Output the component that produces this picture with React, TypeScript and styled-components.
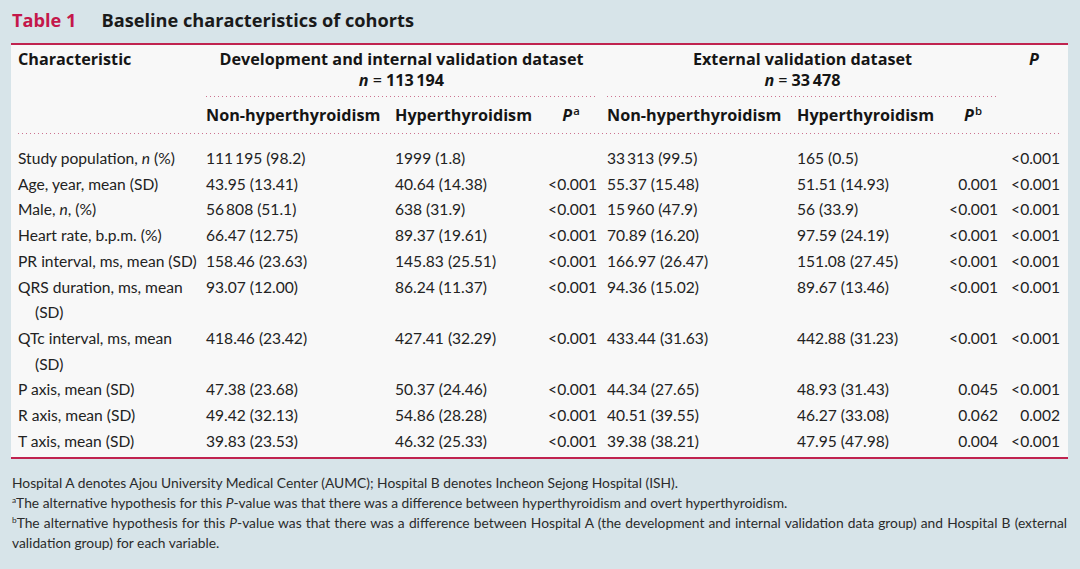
import styled, { createGlobalStyle } from 'styled-components';
import type { ReactNode } from 'react';

const GlobalStyle = createGlobalStyle`
  html, body {
    margin: 0;
    padding: 0;
    background: #d7e4e9;
  }
  body {
    font-family: Lato, 'Liberation Sans', sans-serif;
    color: #1d1d1d;
  }
`;

const Page = styled.div`
  width: 1080px;
  height: 569px;
  padding: 9px 12px 0 11px;
  box-sizing: border-box;
  overflow: hidden;
`;

const Caption = styled.h1`
  margin: 0 0 12px 1px;
  display: flex;
  gap: 25px;
  font-family: 'Open Sans', Lato, sans-serif;
  font-size: 18.2px;
  line-height: 22px;
  font-weight: 700;
  color: #1a1a1a;
`;

const CaptionLabel = styled.span`
  color: #c4174a;
`;

const Panel = styled.div`
  background: #f8f8f8;
  border-top: 2.5px solid #c0234f;
  border-bottom: 2.5px solid #c0234f;
  padding: 4px 8px 3px 7px;
`;

const Grid = styled.div`
  display: grid;
  grid-template-columns: 178px 179px 140px 52px 180px 141px 50px 52px;
  column-gap: 10px;
`;

const Dots = styled.div`
  height: 1px;
  background-image: linear-gradient(to right, #cc7390 1.3px, transparent 1.3px);
  background-size: 4px 1px;
  background-repeat: repeat-x;
`;

const HeadCell = styled.div<{ $span?: string; $align?: string }>`
  grid-column: ${(p) => p.$span || 'auto'};
  text-align: ${(p) => p.$align || 'left'};
  font-family: 'Open Sans', Lato, sans-serif;
  font-weight: 700;
  font-size: 16.2px;
  line-height: 21px;
  color: #151515;
  white-space: nowrap;
`;

const GroupHead = styled(HeadCell)`
  text-align: center;
  padding-bottom: 6px;
  position: relative;

  ${Dots} {
    position: absolute;
    left: 0;
    right: 0;
    bottom: 0;
  }
`;

const Eq = styled.span`
  font-weight: 400;
  margin: 0 4px;
`;

const SubHead = styled(HeadCell)`
  padding: 8px 0 7px;
`;

const FullDots = styled(Dots)`
  grid-column: 1 / -1;
  margin-bottom: 12px;
`;

const Cell = styled.div<{ $right?: boolean }>`
  font-size: 15.6px;
  line-height: 25.7px;
  color: #222;
  white-space: nowrap;
  text-align: ${(p) => (p.$right ? 'right' : 'left')};
`;

const Wrapped = styled.span`
  display: block;
  padding-left: 17px;
`;

const Sup = styled.sup`
  font-size: 0.7em;
  font-weight: 600;
  line-height: 0;
  vertical-align: 0.5em;
  margin-left: 1px;
`;

const Notes = styled.div`
  padding: 14px 1px 0 1px;
  font-size: 13.8px;
  line-height: 20px;
  color: #2b2b2b;
`;

const Note = styled.p`
  margin: 0;
  text-align: justify;
`;

const NoteMark = styled.span`
  font-size: 0.6em;
  line-height: 1;
  position: relative;
  top: -0.6em;
`;

type Row = {
  label: ReactNode;
  wrap?: boolean;
  values: string[];
};

const rows: Row[] = [
  { label: <>Study population, <i>n</i> (%)</>, values: ['111\u2009195 (98.2)', '1999 (1.8)', '', '33\u2009313 (99.5)', '165 (0.5)', '', '<0.001'] },
  { label: 'Age, year, mean (SD)', values: ['43.95 (13.41)', '40.64 (14.38)', '<0.001', '55.37 (15.48)', '51.51 (14.93)', '0.001', '<0.001'] },
  { label: <>Male, <i>n</i>, (%)</>, values: ['56\u2009808 (51.1)', '638 (31.9)', '<0.001', '15\u2009960 (47.9)', '56 (33.9)', '<0.001', '<0.001'] },
  { label: 'Heart rate, b.p.m. (%)', values: ['66.47 (12.75)', '89.37 (19.61)', '<0.001', '70.89 (16.20)', '97.59 (24.19)', '<0.001', '<0.001'] },
  { label: 'PR interval, ms, mean (SD)', values: ['158.46 (23.63)', '145.83 (25.51)', '<0.001', '166.97 (26.47)', '151.08 (27.45)', '<0.001', '<0.001'] },
  { label: 'QRS duration, ms, mean', wrap: true, values: ['93.07 (12.00)', '86.24 (11.37)', '<0.001', '94.36 (15.02)', '89.67 (13.46)', '<0.001', '<0.001'] },
  { label: 'QTc interval, ms, mean', wrap: true, values: ['418.46 (23.42)', '427.41 (32.29)', '<0.001', '433.44 (31.63)', '442.88 (31.23)', '<0.001', '<0.001'] },
  { label: 'P axis, mean (SD)', values: ['47.38 (23.68)', '50.37 (24.46)', '<0.001', '44.34 (27.65)', '48.93 (31.43)', '0.045', '<0.001'] },
  { label: 'R axis, mean (SD)', values: ['49.42 (32.13)', '54.86 (28.28)', '<0.001', '40.51 (39.55)', '46.27 (33.08)', '0.062', '0.002'] },
  { label: 'T axis, mean (SD)', values: ['39.83 (23.53)', '46.32 (25.33)', '<0.001', '39.38 (38.21)', '47.95 (47.98)', '0.004', '<0.001'] },
];

// p-value columns are right aligned, the rest read from the left
const rightCols = [2, 5, 6];

const App = () => {
  return (
    <Page>
      <GlobalStyle />
      <Caption>
        <CaptionLabel>Table 1</CaptionLabel>
        <span>Baseline characteristics of cohorts</span>
      </Caption>
      <Panel>
        <Grid>
          <HeadCell $span="1 / 2">Characteristic</HeadCell>
          <GroupHead $span="2 / 5">
            Development and internal validation dataset
            <br />
            <i>n</i>
            <Eq>=</Eq>113&#8201;194
            <Dots />
          </GroupHead>
          <GroupHead $span="5 / 8">
            External validation dataset
            <br />
            <i>n</i>
            <Eq>=</Eq>33&#8201;478
            <Dots />
          </GroupHead>
          <HeadCell $span="8 / 9" $align="center">
            <i>P</i>
          </HeadCell>

          <SubHead $span="2 / 3">Non-hyperthyroidism</SubHead>
          <SubHead $span="3 / 4">Hyperthyroidism</SubHead>
          <SubHead $span="4 / 5" $align="center">
            <i>P</i>
            <Sup>a</Sup>
          </SubHead>
          <SubHead $span="5 / 6">Non-hyperthyroidism</SubHead>
          <SubHead $span="6 / 7">Hyperthyroidism</SubHead>
          <SubHead $span="7 / 8" $align="center">
            <i>P</i>
            <Sup>b</Sup>
          </SubHead>
          <FullDots />

          {rows.map((row, i) => (
            <>
              <Cell key={`l${i}`}>
                {row.label}
                {row.wrap && <Wrapped>(SD)</Wrapped>}
              </Cell>
              {row.values.map((v, j) => (
                <Cell key={`v${i}-${j}`} $right={rightCols.includes(j)}>
                  {v}
                </Cell>
              ))}
            </>
          ))}
        </Grid>
      </Panel>
      <Notes>
        <Note>
          Hospital A denotes Ajou University Medical Center (AUMC); Hospital B denotes Incheon Sejong Hospital (ISH).
        </Note>
        <Note>
          <NoteMark>a</NoteMark>The alternative hypothesis for this <i>P</i>-value was that there was a difference between
          hyperthyroidism and overt hyperthyroidism.
        </Note>
        <Note>
          <NoteMark>b</NoteMark>The alternative hypothesis for this <i>P</i>-value was that there was a difference between
          Hospital A (the development and internal validation data group) and Hospital B (external validation group) for
          each variable.
        </Note>
      </Notes>
    </Page>
  );
};

export default App;
